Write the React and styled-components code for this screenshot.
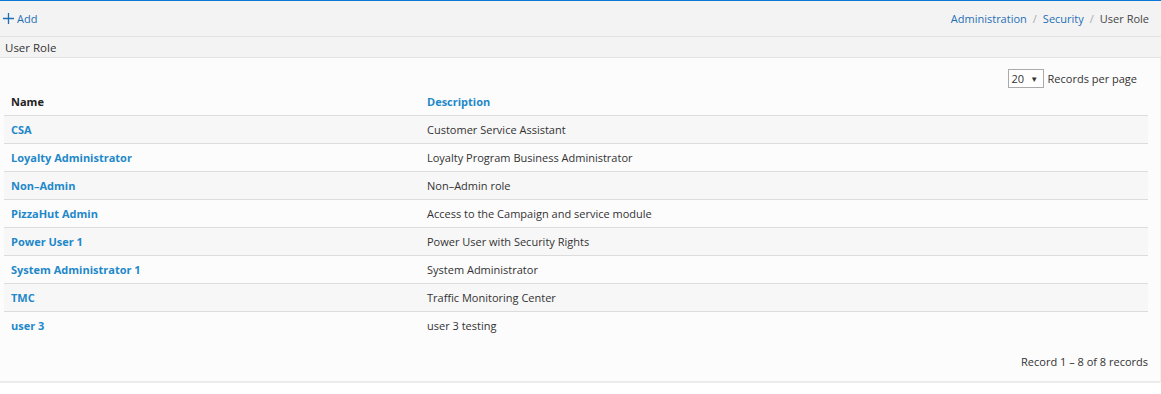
import React from 'react';
import styled, { createGlobalStyle } from 'styled-components';

const GlobalStyle = createGlobalStyle`
  body {
    margin: 0;
    background: #fff;
    font-family: "Open Sans", "Noto Sans", sans-serif;
    font-size: 11px;
    color: #333;
  }
`

const TopBar = styled.div`
  height: 35px;
  display: flex;
  align-items: center;
  justify-content: space-between;
  padding: 0 12px 0 3px;
  background: #f3f3f3;
  border-top: 1px solid #0a78d7;
  border-bottom: 1px solid #e2e2e2;
`

const AddButton = styled.a`
  display: flex;
  align-items: center;
  gap: 3px;
  color: #1f6fb5;
  cursor: pointer;
  svg { display: block; }
`

const Crumbs = styled.div`
  display: flex;
  align-items: center;
  gap: 6px;
`

const Crumb = styled.a`
  color: ${p => (p.current ? '#444' : '#1f6fb5')};
`

const Sep = styled.span`
  color: #aaa;
`

const TitleBar = styled.div`
  height: 20px;
  display: flex;
  align-items: center;
  padding: 0 5px;
  background: #f3f3f3;
  border-bottom: 1px solid #e2e2e2;
  color: #333;
  font-size: 11.5px;
`

const Panel = styled.div`
  background: #fcfcfc;
  padding: 11px 12px 12px 4px;
  border-right: 1px solid #f0f0f0;
  border-bottom: 2px solid #ececec;
  height: 300px;
  display: flex;
  flex-direction: column;
`

const PagerRow = styled.div`
  display: flex;
  justify-content: flex-end;
  align-items: center;
  gap: 4px;
  padding-right: 11px;
  height: 18px;
`

const Select = styled.div`
  border: 1px solid #aaa;
  background: #fff;
  display: flex;
  align-items: center;
  gap: 6px;
  padding-left: 3px;
  box-sizing: border-box;
  width: 36px;
  height: 19px;
  span { font-size: 8px; }
`

const Table = styled.table`
  width: 100%;
  border-collapse: collapse;
  th, td {
    height: 27px;
    padding: 0 7px;
    text-align: left;
  }
  th {
    font-weight: bold;
    height: 28px;
    border-bottom: 1px solid #dcdcdc;
  }
`

const HeadCell = styled.th`
  color: ${p => (p.link ? '#1e88c9' : '#222')};
  width: ${p => p.w || 'auto'};
`

const Row = styled.tr`
  background: ${p => (p.odd ? '#f7f7f7' : 'transparent')};
  border-bottom: ${p => (p.last ? 'none' : '1px solid #dcdcdc')};
`

const NameCell = styled.td`
  color: #1e88c9;
  font-weight: bold;
`

const DescCell = styled.td`
  color: #333;
`

const Footer = styled.div`
  margin-top: auto;
  text-align: right;
  color: #333;
`

const roles = [
  ['CSA', 'Customer Service Assistant'],
  ['Loyalty Administrator', 'Loyalty Program Business Administrator'],
  ['Non–Admin', 'Non–Admin role'],
  ['PizzaHut Admin', 'Access to the Campaign and service module'],
  ['Power User 1', 'Power User with Security Rights'],
  ['System Administrator 1', 'System Administrator'],
  ['TMC', 'Traffic Monitoring Center'],
  ['user 3', 'user 3 testing'],
]

export default function App() {
  return (
    <>
      <GlobalStyle />
      <TopBar>
        <AddButton>
          <svg width="11" height="11" viewBox="0 0 11 11">
            <path d="M5.5 0v11M0 5.5h11" stroke="#1f6fb5" strokeWidth="1.3" />
          </svg>
          Add
        </AddButton>
        <Crumbs>
          <Crumb>Administration</Crumb>
          <Sep>/</Sep>
          <Crumb>Security</Crumb>
          <Sep>/</Sep>
          <Crumb current>User Role</Crumb>
        </Crumbs>
      </TopBar>
      <TitleBar>User Role</TitleBar>
      <Panel>
        <PagerRow>
          <Select>20 <span>▼</span></Select>
          Records per page
        </PagerRow>
        <Table>
          <thead>
            <tr>
              <HeadCell w="402px">Name</HeadCell>
              <HeadCell link>Description</HeadCell>
            </tr>
          </thead>
          <tbody>
            {roles.map(([name, desc], i) => (
              <Row key={name} odd={i % 2 === 0} last={i === roles.length - 1}>
                <NameCell>{name}</NameCell>
                <DescCell>{desc}</DescCell>
              </Row>
            ))}
          </tbody>
        </Table>
        <Footer>Record 1 – 8 of 8 records</Footer>
      </Panel>
    </>
  )
}
